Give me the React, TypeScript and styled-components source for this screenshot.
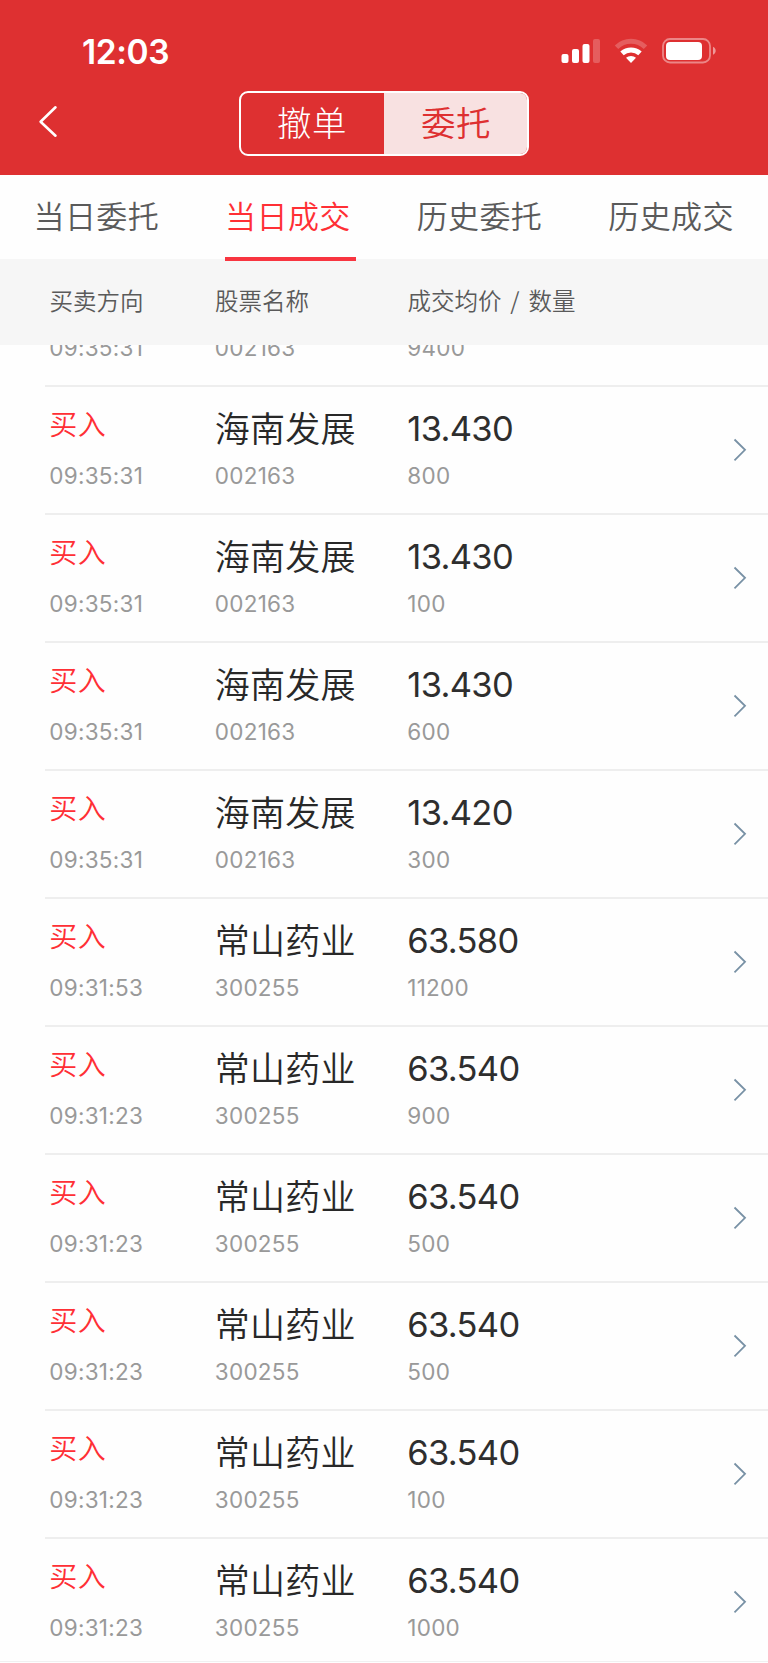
import React from "react";
import styled, { createGlobalStyle } from "styled-components";

const cjk = `Inter, "Noto Sans CJK SC", sans-serif`;

const GlobalStyle = createGlobalStyle`
  *, *::before, *::after { box-sizing: border-box; }
  body { margin: 0; background: #fefefe; font-family: ${cjk}; }
`;

const Screen = styled.div`
  width: 768px;
  height: 1663px;
  overflow: hidden;
  display: flex;
  flex-direction: column;
  background: #fefefe;
`;

const Header = styled.header`
  height: 174.5px;
  flex: none;
  background: #de3031;
  color: #fff;
`;

const StatusBar = styled.div`
  height: 90.6px;
  padding: 12px 52px 0 82px;
  display: flex;
  align-items: center;
  justify-content: space-between;
`;

const Clock = styled.span`
  padding-top: 2px;
  font-size: 33.5px;
  font-weight: 600;
  line-height: 40px;
  letter-spacing: -0.4px;
`;

const StatusIcons = styled.svg`
  display: block;
  width: 156px;
  height: 28px;
`;

const NavBar = styled.div`
  height: 65px;
  display: grid;
  grid-template-columns: 239px 290px 1fr;
`;

const BackButton = styled.button`
  justify-self: start;
  align-self: start;
  margin: 14px 0 0 38px;
  padding: 0;
  border: 0;
  background: none;
  svg { display: block; }
`;

const Segmented = styled.div`
  display: flex;
  border: 2px solid #fff;
  border-radius: 9px;
  overflow: hidden;
`;

const Segment = styled.button<{ $active?: boolean }>`
  flex: 1;
  padding: ${(p) => (p.$active ? "1px 0 0 1px" : "1px 1px 0 0")};
  border: 0;
  font-family: ${cjk};
  font-size: 34.5px;
  font-weight: ${(p) => (p.$active ? 350 : 300)};
  letter-spacing: 0.5px;
  line-height: 60px;
  color: ${(p) => (p.$active ? "#de3031" : "#fff")};
  background: ${(p) => (p.$active ? "#f8e1e1" : "transparent")};
`;

const Tabs = styled.nav`
  height: 84.5px;
  flex: none;
  display: grid;
  grid-template-columns: repeat(4, 191.6px);
  padding-left: 0.5px;
`;

const Tab = styled.div<{ $active?: boolean }>`
  display: flex;
  flex-direction: column;
  align-items: center;
  justify-content: space-between;
  height: 86.5px;
  z-index: 1;
  font-size: 31px;
  font-weight: 350;
  letter-spacing: 0.4px;
  line-height: 84px;
  white-space: nowrap;
  color: ${(p) => (p.$active ? "#ff2f35" : "#5a5a5a")};
  &::after {
    content: "";
    width: 131px;
    height: 4px;
    margin: -2px 0 0 5px;
    flex: none;
    background: ${(p) => (p.$active ? "#f83540" : "transparent")};
  }
`;

const columns = "165.5px 192.5px 1fr 40px";

const ColumnHeads = styled.div`
  height: 85.5px;
  flex: none;
  display: grid;
  grid-template-columns: ${columns};
  padding-left: 49.5px;
  background: #f6f6f6;
  color: #5a5a5a;
  font-size: 23.5px;
  font-weight: 350;
  line-height: 86px;
  white-space: pre;
`;

const Slash = styled.span`
  font-family: "Noto Sans CJK SC", sans-serif;
  line-height: 1;
  margin: 0 3.6px;
`;

const List = styled.div`
  flex: 1;
  min-height: 0;
  overflow: hidden;
`;

const Rows = styled.div`
  margin-left: 45px;
`;

const Row = styled.div<{ $cut?: boolean }>`
  height: ${(p) => (p.$cut ? "42.5px" : "127.96px")};
  display: grid;
  grid-template-columns: ${columns};
  padding-left: 4.3px;
  border-bottom: 2px solid #eee;
`;

const Cell = styled.div<{ $cut?: boolean }>`
  display: flex;
  flex-direction: column;
  padding-top: ${(p) => (p.$cut ? "0" : "17.3px")};
  margin-top: ${(p) => (p.$cut ? "-16.5px" : "0")};
`;

const Side = styled.span`
  height: 52px;
  line-height: 43px;
  font-size: 28px;
  font-weight: 350;
  letter-spacing: 0.4px;
  color: #ff2f35;
`;

const StockName = styled.span`
  height: 52px;
  line-height: 50px;
  font-size: 35px;
  font-weight: 350;
  letter-spacing: 0.2px;
  color: #282828;
`;

const Price = styled.span`
  height: 52px;
  line-height: 49px;
  font-size: 34.5px;
  font-weight: 370;
  letter-spacing: -0.7px;
  color: #2e2e2e;
`;

const Minor = styled.span`
  line-height: 40px;
  font-size: 22.5px;
  letter-spacing: 0.25px;
  color: #999;
`;

const Chevron = styled.svg`
  display: block;
  margin-top: 50.2px;
`;

const BottomEdge = styled.div`
  flex: none;
  height: 2px;
  border-top: 1px solid #f0f0f0;
`;

type Trade = [time: string, name: string, code: string, price: string, quantity: string];

const trades: Trade[] = [
  ["09:35:31", "海南发展", "002163", "13.430", "800"],
  ["09:35:31", "海南发展", "002163", "13.430", "100"],
  ["09:35:31", "海南发展", "002163", "13.430", "600"],
  ["09:35:31", "海南发展", "002163", "13.420", "300"],
  ["09:31:53", "常山药业", "300255", "63.580", "11200"],
  ["09:31:23", "常山药业", "300255", "63.540", "900"],
  ["09:31:23", "常山药业", "300255", "63.540", "500"],
  ["09:31:23", "常山药业", "300255", "63.540", "500"],
  ["09:31:23", "常山药业", "300255", "63.540", "100"],
  ["09:31:23", "常山药业", "300255", "63.540", "1000"],
];

const tabs = ["当日委托", "当日成交", "历史委托", "历史成交"];

export default function App() {
  return (
    <Screen>
      <GlobalStyle />
      <Header>
        <StatusBar>
          <Clock>12:03</Clock>
          <StatusIcons viewBox="0 0 156 28" fill="#fff">
            <rect x="1.5" y="17" width="7" height="9" rx="2" />
            <rect x="12" y="12" width="7" height="14" rx="2" />
            <rect x="22.5" y="7" width="7" height="19" rx="2" />
            <rect x="33" y="2" width="7" height="24" rx="2" opacity="0.22" />
            <g fill="none" stroke="#fff" strokeWidth="5">
              <path d="M56.5 10.2a20.8 20.8 0 0 1 29 0" opacity="0.22" />
              <path d="M62 16.4a13.3 13.3 0 0 1 18 0" />
            </g>
            <path d="M71 26l-5-5.2a7.6 7.6 0 0 1 10 0z" />
            <rect x="103" y="2" width="47" height="23.5" rx="7" fill="none" stroke="#fff" strokeWidth="1.8" opacity="0.42" />
            <rect x="106" y="5" width="36" height="18" rx="4" />
            <path d="M153 9.8v8c3.6-1.4 3.6-6.6 0-8z" opacity="0.5" />
          </StatusIcons>
        </StatusBar>
        <NavBar>
          <BackButton aria-label="返回">
            <svg width="22" height="34" viewBox="0 0 22 34" fill="none" stroke="#fff" strokeWidth="2.6" strokeLinecap="round" strokeLinejoin="round">
              <path d="M17.5 2.3L2.6 16.7l14.9 14" />
            </svg>
          </BackButton>
          <Segmented>
            <Segment>撤单</Segment>
            <Segment $active>委托</Segment>
          </Segmented>
        </NavBar>
      </Header>
      <Tabs>
        {tabs.map((label, i) => (
          <Tab key={label} $active={i === 1}>{label}</Tab>
        ))}
      </Tabs>
      <ColumnHeads>
        <span>买卖方向</span>
        <span>股票名称</span>
        <span>成交均价<Slash> / </Slash>数量</span>
      </ColumnHeads>
      <List>
        <Rows>
          <Row $cut>
            <Cell $cut><Minor>09:35:31</Minor></Cell>
            <Cell $cut><Minor>002163</Minor></Cell>
            <Cell $cut><Minor>9400</Minor></Cell>
          </Row>
          {trades.map(([time, name, code, price, quantity], i) => (
            <Row key={i}>
              <Cell>
                <Side>买入</Side>
                <Minor>{time}</Minor>
              </Cell>
              <Cell>
                <StockName>{name}</StockName>
                <Minor>{code}</Minor>
              </Cell>
              <Cell>
                <Price>{price}</Price>
                <Minor>{quantity}</Minor>
              </Cell>
              <Chevron width="22" height="26" viewBox="0 0 22 26" fill="none" stroke="#7891a5" strokeWidth="1.8">
                <path d="M6.5 2.5l10.5 10.3L6.5 23.3" />
              </Chevron>
            </Row>
          ))}
        </Rows>
      </List>
      <BottomEdge />
    </Screen>
  );
}
